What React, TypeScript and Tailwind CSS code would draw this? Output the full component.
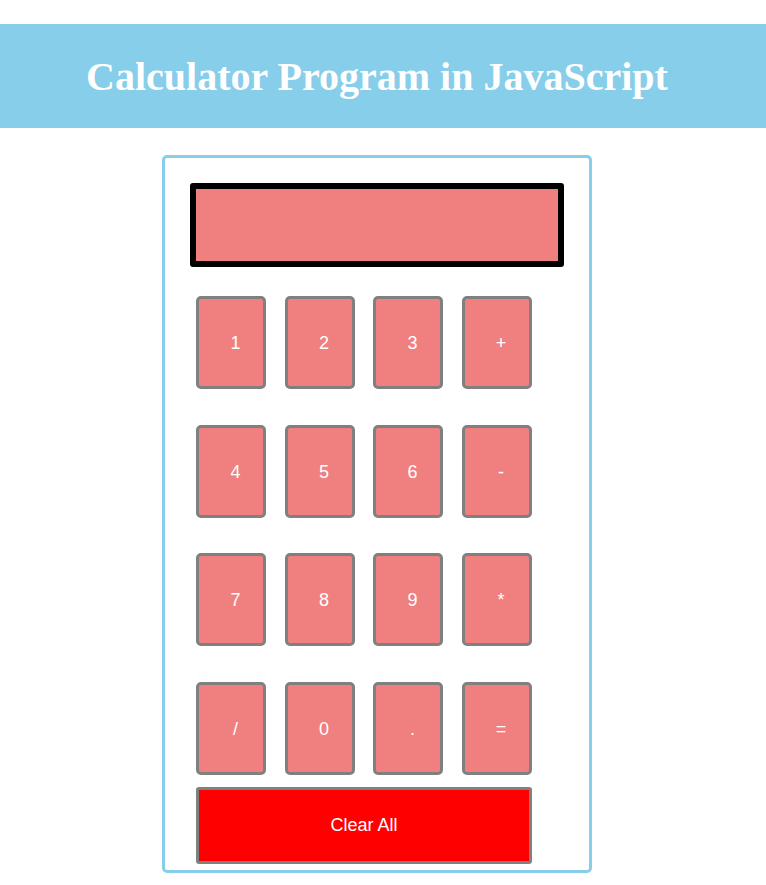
import React, { useState } from 'react';

const keys = ['1', '2', '3', '+', '4', '5', '6', '-', '7', '8', '9', '*', '/', '0', '.', '='];

export default function App() {
  const [display, setDisplay] = useState('');

  const press = (k: string) => {
    if (k === '=') {
      try {
        // eslint-disable-next-line no-new-func
        setDisplay(String(Function(`return (${display})`)()));
      } catch {
        setDisplay('Error');
      }
      return;
    }
    setDisplay(d => d + k);
  };

  return (
    <div className="min-h-[885px] bg-white pt-[24px] font-['Liberation_Sans',Arial,sans-serif]">
      {/* Header band */}
      <div className="h-[104px] bg-[#87CEEB] w-full">
        <div className="w-[754px] h-full flex items-center justify-center pt-[2px]">
          <h1 className="font-['Liberation_Serif','Times_New_Roman',serif] font-bold text-[40px] text-white leading-none">
            Calculator Program in JavaScript
          </h1>
        </div>
      </div>

      {/* Calculator */}
      <div className="w-[754px] flex justify-center pt-[27px]">
        <div className="w-[430px] h-[718px] border-[3px] border-[#87CEEB] rounded-[5px] px-[25px] pt-[25px]">
          <div className="h-[84px] w-full bg-[#F08080] border-[6px] border-black rounded-[3px] flex items-center justify-end px-3 text-white text-[28px] overflow-hidden">
            {display}
          </div>

          <div className="ml-[6px] mt-[29px] w-[336px]">
            <div className="grid grid-cols-4 gap-x-[18px] gap-y-[35.67px]">
              {keys.map(k => (
                <button
                  key={k}
                  onClick={() => press(k)}
                  className="h-[93px] w-[70px] bg-[#F08080] border-[3px] border-[#808080] rounded-[5px] text-white text-[18px] pl-[9px] pt-[2px] flex items-center justify-center"
                >
                  {k}
                </button>
              ))}
            </div>
            <button
              onClick={() => setDisplay('')}
              className="mt-[12px] h-[77px] w-full bg-[#FF0000] border-[3px] border-[#808080] rounded-[3px] text-white text-[18px] flex items-center justify-center"
            >
              Clear All
            </button>
          </div>
        </div>
      </div>
    </div>
  );
}
